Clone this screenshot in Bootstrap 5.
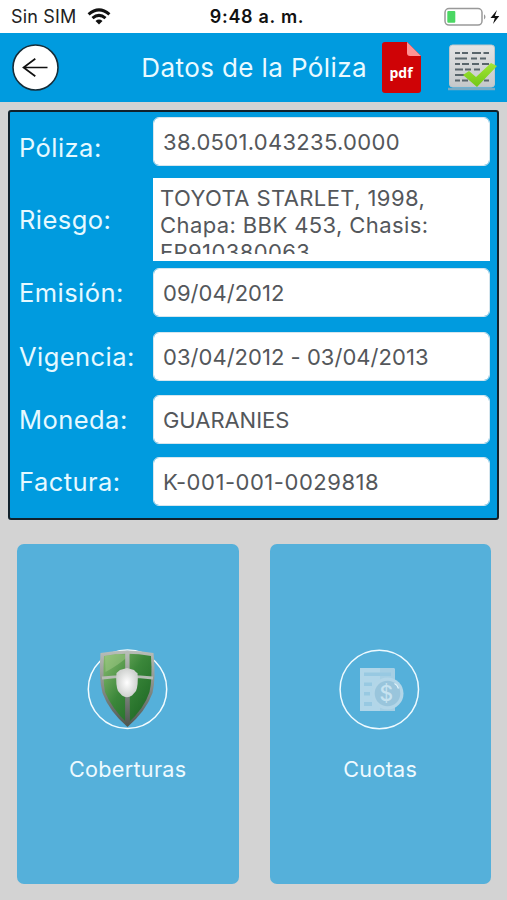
<!DOCTYPE html>
<html lang="es">
<head>
<meta charset="utf-8">
<meta name="viewport" content="width=device-width, initial-scale=1">
<title>Datos de la Póliza</title>
<link href="https://cdn.jsdelivr.net/npm/bootstrap@5.3.0/dist/css/bootstrap.min.css" rel="stylesheet">
<style>
body{font-family:Inter,"Liberation Sans",sans-serif;background:#d3d3d3;height:900px;overflow:hidden}
svg{display:block;flex:none}
.statusbar{height:33px;font-size:18px;line-height:33px;color:#222;padding:0 7px 0 11px}
.statusbar .carrier{letter-spacing:.15px}
.statusbar .clock{font-weight:600;color:#111;letter-spacing:.7px;padding-left:3px}
.side{flex:1 1 0}
.wifi{margin-left:11px}
.topbar{height:69px;background:#009bdf;padding:0 9px 0 12px}
.topbar h1{font-size:26px;font-weight:400;letter-spacing:.4px;color:#e9faff;margin:0 15px 0 0;line-height:1}
.check-sheet{margin-left:27px}
.panel{margin:8px 8px 0 8px;height:410px;background:#009bdf;border:2px solid #10212b;border-radius:3px;padding:5px 7px 0 9px}
.line{margin-bottom:14px}
.line label{width:134px;flex:none;color:#e6f9ff;font-size:25.5px;line-height:32px;letter-spacing:.45px;white-space:nowrap;padding-top:1px}
.line .form-control{height:49px;border:1px solid #d6e6ee;border-radius:6px;padding:0 9px;font-size:22px;line-height:48px;color:#54575b;letter-spacing:.3px;white-space:nowrap}
.line .dates{letter-spacing:.03px}
.line .upper{letter-spacing:-.05px}
.line .invoice{letter-spacing:.53px}
.line .memo{height:83px;border:0;border-radius:0;padding:7px 5px 0 7px;line-height:27px;letter-spacing:.4px;white-space:normal}
.memo div{height:69px;overflow:hidden}
.first{margin-bottom:12px}
.first label{padding-top:12px}
.second{margin-bottom:7px}
.third{margin-bottom:15px}
.fifth{margin-bottom:13px}
.tiles{padding:24px 16px 0 17px;gap:31px}
.tile{height:340px;background:#55b0da;border:0;border-radius:7px;color:#eefaff;font-size:21.6px;letter-spacing:.3px;padding:103px 0 0}
.tile span{display:block;line-height:28px;margin-top:24px}
</style>
</head>
<body>
<header>
<div class="statusbar d-flex align-items-center bg-white">
  <div class="side d-flex align-items-center"><span class="carrier">Sin SIM</span>
    <svg class="wifi" width="24" height="17" viewBox="0 0 24 17"><g fill="none" stroke="#111" stroke-width="3.1"><path d="M1.600 6.400Q12-2.600 22.400 6.400"/><path d="M5.500 10.200Q12 4.600 18.500 10.200"/></g><path d="M8.500 13Q12 10.100 15.500 13L12 16.400Z" fill="#111"/></svg>
  </div>
  <span class="clock">9:48 a. m.</span>
  <div class="side d-flex align-items-center justify-content-end">
    <svg width="56" height="20" viewBox="0 0 56 20"><rect x="1" y="1.600" width="37" height="16.500" rx="4" fill="#fff" stroke="#999" stroke-width="1.500"/><rect x="3.300" y="4" width="8" height="11.800" rx="1" fill="#4bd763"/><path d="M40 7.200q3 2.700 0 5.400z" fill="#999"/><path d="M53 3L46.500 11h4.300L49 17l6.300-8h-4.400z" fill="#111"/></svg>
  </div>
</div>
<nav class="topbar d-flex align-items-center">
  <svg width="47" height="47" viewBox="0 0 47 47"><circle cx="23.500" cy="23.500" r="22.500" fill="#fff" stroke="#152c38" stroke-width="1.600"/><path d="M35.500 23.500H11.500M23.300 14.700L11.500 23.500L23.300 32.300" fill="none" stroke="#111" stroke-width="1.700"/></svg>
  <h1 class="ms-auto">Datos de la Póliza</h1>
  <svg width="39" height="51" viewBox="0 0 39 51"><path d="M3 0H25L39 14V48q0 3-3 3H3q-3 0-3-3V3Q0 0 3 0Z" fill="#cf0306"/><path d="M25 0L39 14H28q-3 0-3-3Z" fill="#ff9294"/><text x="19" y="36" text-anchor="middle" font-family="Open Sans, sans-serif" font-weight="700" font-size="14" fill="#fff">pdf</text></svg>
  <svg class="check-sheet" width="50" height="47" viewBox="0 0 50 47"><defs><linearGradient id="sheet" x2="0" y2="1"><stop stop-color="#e4e4e4"/><stop offset="1" stop-color="#c5c8ca"/></linearGradient><linearGradient id="tick" x2="0" y2="1"><stop stop-color="#a3e534"/><stop offset="1" stop-color="#71c817"/></linearGradient></defs><path d="M0 45H47" stroke="#79abc4" stroke-width="2.500"/><rect x="1.500" y="1" width="45" height="42" rx="3" fill="url(#sheet)" stroke="#bdc6cb"/><g stroke="#59656b" stroke-width="2.200" fill="none"><path d="M7 9H12M14 9H20M24 9H33M35.500 9H41M7 14.500H19M23 14.500H29M32 14.500H38M7 20H12M14 20H21M24 20H31M34 20H41M7 25.500H15M17 25.500H23M26 25.500H32M7 31H18M7 36.500H12M14 36.500H20M36 36.500H41"/></g><path d="M15 31l6-4 7 6L43 19l6 3L29 43Z" fill="url(#tick)"/></svg>
</nav>
</header>
<main>
<form class="panel">
  <div class="line first d-flex align-items-center"><label>Póliza:</label><div class="form-control">38.0501.043235.0000</div></div>
  <div class="line second d-flex align-items-center"><label>Riesgo:</label><div class="form-control memo"><div>TOYOTA STARLET, 1998, Chapa: BBK 453, Chasis: EP910380063</div></div></div>
  <div class="line third d-flex align-items-center"><label>Emisión:</label><div class="form-control dates">09/04/2012</div></div>
  <div class="line d-flex align-items-center"><label>Vigencia:</label><div class="form-control dates">03/04/2012 - 03/04/2013</div></div>
  <div class="line fifth d-flex align-items-center"><label>Moneda:</label><div class="form-control upper">GUARANIES</div></div>
  <div class="line d-flex align-items-center"><label>Factura:</label><div class="form-control invoice">K-001-001-0029818</div></div>
</form>
<div class="tiles d-flex">
  <button class="tile btn flex-fill w-50 d-flex flex-column align-items-center" type="button">
    <svg width="82" height="84" viewBox="0 0 82 84"><defs><linearGradient id="field" x2="1" y2="1"><stop stop-color="#8bbd71"/><stop offset=".45" stop-color="#3b873a"/><stop offset="1" stop-color="#17611f"/></linearGradient><linearGradient id="metal" x2="0" y2="1"><stop stop-color="#b9beb9"/><stop offset="1" stop-color="#4f5751"/></linearGradient><radialGradient id="boss"><stop stop-color="#fff"/><stop offset="1" stop-color="#cfd1cf"/></radialGradient></defs>
    <circle cx="40.500" cy="42.300" r="39.200" fill="none" stroke="#f3fcff" stroke-width="1.500"/>
    <path d="M13.500 6Q40 1 66.500 6Q69 31 65.500 46Q59 64 40.500 80Q22 64 15.500 46Q11.500 31 13.500 6Z" fill="url(#metal)"/>
    <path d="M17 9Q40 4.500 64 9Q65.500 32 62.500 45Q57 62 40.500 76.500Q25 62 18 45Q15.500 32 17 9Z" fill="url(#field)"/>
    <path d="M18.500 25Q32 18 43 7.500L31 7L18 9Z" fill="#a6cf8b" opacity=".45"/>
    <path d="M38.200 6H42.500L42.900 76L40.500 78L38.100 76Z" fill="url(#metal)"/><path d="M15 31Q40.500 28 66 31" fill="none" stroke="#b5bdb3" stroke-width="3"/>
    <path d="M33 23L40 21L47 23Q49.500 26 50.500 26Q51.500 38 49 44L45 48.500Q40 52 35 48.500L31 44Q28.500 38 29.500 26Z" fill="url(#boss)"/></svg>
    <span>Coberturas</span>
  </button>
  <button class="tile btn flex-fill w-50 d-flex flex-column align-items-center" type="button">
    <svg width="82" height="84" viewBox="0 0 82 84"><circle cx="40.300" cy="42.500" r="39.200" fill="none" stroke="#eefaff" stroke-width="1.500"/><path d="M21 21H54q2 0 2 2V64H21Z" fill="#b1d6e9"/><path d="M41 21H54q2 0 2 2V64H41Z" fill="#a6cfe4"/><g fill="#98c9e2"><path d="M25 25.500H52V29H25ZM25 35.500H33V39H25ZM25 45H31V48.500H25ZM25 55H33V59H25Z"/></g><circle cx="48.500" cy="46.500" r="16" fill="#b3d6e8"/><circle cx="48.500" cy="46.500" r="12.800" fill="#99c5dc"/><text x="47.500" y="54" text-anchor="middle" font-family="Inter, sans-serif" font-size="21" font-weight="500" fill="#c7e3f0">$</text><path d="M55.500 36.500q3 1.500 4 5" fill="none" stroke="#e6f6fc" stroke-width="1.300"/></svg>
    <span>Cuotas</span>
  </button>
</div>
</main>
<script src="https://cdn.jsdelivr.net/npm/bootstrap@5.3.0/dist/js/bootstrap.bundle.min.js"></script>
</body>
</html>
